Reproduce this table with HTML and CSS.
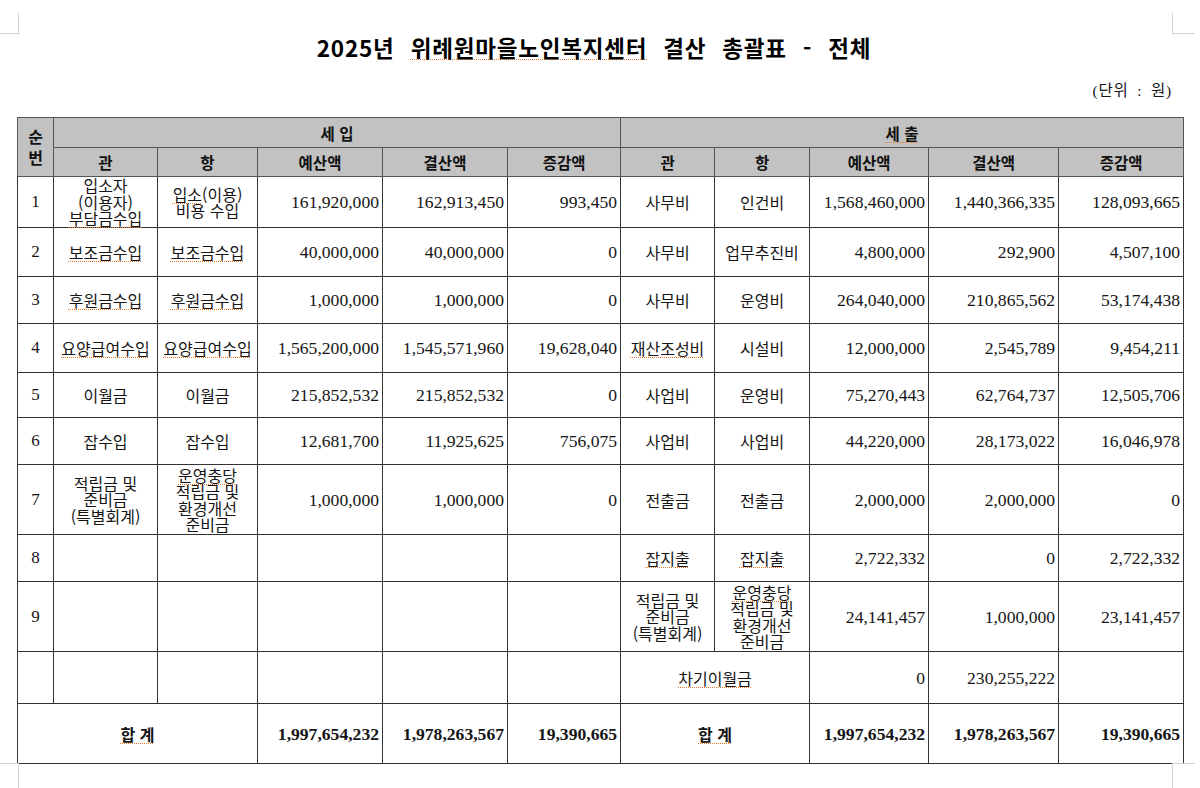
FILE: index.html
```html
<!DOCTYPE html>
<html lang="ko">
<head>
<meta charset="utf-8">
<title>2025년 위례원마을노인복지센터 결산 총괄표 - 전체</title>
<link rel="stylesheet" href="styles.css">
</head>
<body>
<div class="page">
  <div class="mark mark-tl"></div>
  <div class="mark mark-tr"></div>
  <div class="mark mark-bl"></div>
  <div class="mark mark-br"></div>

  <h1 class="title">2025년 <span class="sp">위례원마을노인복지센터</span> 결산 총괄표 - 전체</h1>
  <div class="unit">(단위 : 원)</div>

  <table class="sheet">
    <colgroup>
      <col class="c-no">
      <col class="c-gwan">
      <col class="c-hang">
      <col class="c-amt">
      <col class="c-amt">
      <col class="c-diff">
      <col class="c-gwan2">
      <col class="c-hang2">
      <col class="c-amt2">
      <col class="c-amt3">
      <col class="c-amt">
    </colgroup>
    <thead>
      <tr class="h1">
        <th rowspan="2" class="no-head">순<br>번</th>
        <th colspan="5">세 입</th>
        <th colspan="5"><span class="sp">세 출</span></th>
      </tr>
      <tr class="h2">
        <th>관</th><th>항</th><th>예산액</th><th>결산액</th><th>증감액</th>
        <th>관</th><th>항</th><th>예산액</th><th>결산액</th><th>증감액</th>
      </tr>
    </thead>
    <tbody>
      <tr class="r51">
        <td class="no">1</td>
        <td class="t ml">입소자<br>(이용자)<br><span class="sp">부담금수입</span></td>
        <td class="t ml"><span class="sp">입소</span>(이용)<br>비용 수입</td>
        <td class="n">161,920,000</td><td class="n">162,913,450</td><td class="n">993,450</td>
        <td class="t">사무비</td><td class="t">인건비</td>
        <td class="n">1,568,460,000</td><td class="n">1,440,366,335</td><td class="n">128,093,665</td>
      </tr>
      <tr class="r49">
        <td class="no">2</td>
        <td class="t"><span class="sp">보조금수입</span></td><td class="t"><span class="sp">보조금수입</span></td>
        <td class="n">40,000,000</td><td class="n">40,000,000</td><td class="n">0</td>
        <td class="t">사무비</td><td class="t">업무추진비</td>
        <td class="n">4,800,000</td><td class="n">292,900</td><td class="n">4,507,100</td>
      </tr>
      <tr class="r47">
        <td class="no">3</td>
        <td class="t"><span class="sp">후원금수입</span></td><td class="t"><span class="sp">후원금수입</span></td>
        <td class="n">1,000,000</td><td class="n">1,000,000</td><td class="n">0</td>
        <td class="t">사무비</td><td class="t">운영비</td>
        <td class="n">264,040,000</td><td class="n">210,865,562</td><td class="n">53,174,438</td>
      </tr>
      <tr class="r49">
        <td class="no">4</td>
        <td class="t"><span class="sp">요양급여수입</span></td><td class="t"><span class="sp">요양급여수입</span></td>
        <td class="n">1,565,200,000</td><td class="n">1,545,571,960</td><td class="n">19,628,040</td>
        <td class="t"><span class="sp">재산조성비</span></td><td class="t">시설비</td>
        <td class="n">12,000,000</td><td class="n">2,545,789</td><td class="n">9,454,211</td>
      </tr>
      <tr class="r45">
        <td class="no">5</td>
        <td class="t">이월금</td><td class="t">이월금</td>
        <td class="n">215,852,532</td><td class="n">215,852,532</td><td class="n">0</td>
        <td class="t">사업비</td><td class="t">운영비</td>
        <td class="n">75,270,443</td><td class="n">62,764,737</td><td class="n">12,505,706</td>
      </tr>
      <tr class="r47">
        <td class="no">6</td>
        <td class="t">잡수입</td><td class="t">잡수입</td>
        <td class="n">12,681,700</td><td class="n">11,925,625</td><td class="n">756,075</td>
        <td class="t">사업비</td><td class="t">사업비</td>
        <td class="n">44,220,000</td><td class="n">28,173,022</td><td class="n">16,046,978</td>
      </tr>
      <tr class="r70">
        <td class="no">7</td>
        <td class="t ml">적립금 및<br>준비금<br>(특별회계)</td>
        <td class="t ml"><span class="sp">운영충당</span><br>적립금 및<br>환경개선<br>준비금</td>
        <td class="n">1,000,000</td><td class="n">1,000,000</td><td class="n">0</td>
        <td class="t">전출금</td><td class="t">전출금</td>
        <td class="n">2,000,000</td><td class="n">2,000,000</td><td class="n">0</td>
      </tr>
      <tr class="r47">
        <td class="no">8</td>
        <td></td><td></td><td></td><td></td><td></td>
        <td class="t"><span class="sp">잡지출</span></td><td class="t"><span class="sp">잡지출</span></td>
        <td class="n">2,722,332</td><td class="n">0</td><td class="n">2,722,332</td>
      </tr>
      <tr class="r70">
        <td class="no">9</td>
        <td></td><td></td><td></td><td></td><td></td>
        <td class="t ml">적립금 및<br>준비금<br>(특별회계)</td>
        <td class="t ml"><span class="sp">운영충당</span><br>적립금 및<br>환경개선<br>준비금</td>
        <td class="n">24,141,457</td><td class="n">1,000,000</td><td class="n">23,141,457</td>
      </tr>
      <tr class="r52">
        <td></td><td></td><td></td><td></td><td></td><td></td>
        <td class="t" colspan="2"><span class="sp">차기이월금</span></td>
        <td class="n">0</td><td class="n">230,255,222</td><td></td>
      </tr>
      <tr class="r60 total">
        <td class="t sum" colspan="3"><span class="sp">합 계</span></td>
        <td class="n">1,997,654,232</td><td class="n">1,978,263,567</td><td class="n">19,390,665</td>
        <td class="t sum" colspan="2"><span class="sp">합 계</span></td>
        <td class="n">1,997,654,232</td><td class="n">1,978,263,567</td><td class="n">19,390,665</td>
      </tr>
    </tbody>
  </table>
</div>
</body>
</html>
```

FILE: styles.css
```css
html, body {
  margin: 0;
  padding: 0;
  background: #ffffff;
}

body {
  font-family: "Liberation Serif", "Noto Sans CJK KR", serif;
  color: #151515;
}

.page {
  position: relative;
  width: 1200px;
  height: 788px;
  overflow: hidden;
}

/* page corner guides */
.mark {
  position: absolute;
  border-color: #d4d4d4;
  border-style: solid;
  border-width: 0;
}
.mark-tl { left: 0; top: 13px; width: 18px; height: 20px; border-right-width: 1px; border-bottom-width: 1px; }
.mark-tr { left: 1172px; top: 13px; width: 22px; height: 20px; border-left-width: 1px; border-bottom-width: 1px; }
.mark-bl { left: 0; top: 763px; width: 18px; height: 25px; border-right-width: 1px; border-top-width: 1px; }
.mark-br { left: 1172px; top: 763px; width: 22px; height: 25px; border-left-width: 1px; border-top-width: 1px; }

.title {
  margin: 32px 0 0;
  padding-right: 12px;
  height: 30px;
  line-height: 30px;
  text-align: center;
  font-family: "Noto Sans CJK KR", sans-serif;
  font-weight: bold;
  font-size: 22.5px;
  letter-spacing: 0.8px;
  word-spacing: 9px;
  color: #000;
}

.sp {
  text-decoration: underline dotted #ee7a2c;
  text-decoration-thickness: 1px;
  text-underline-offset: 2px;
}

.unit {
  margin-top: 18px;
  height: 22px;
  line-height: 22px;
  padding-right: 28px;
  text-align: right;
  font-size: 15.5px;
  letter-spacing: 0.8px;
  word-spacing: 4px;
}

.sheet {
  margin: 15px 0 0 17px;
  width: 1166px;
  border-collapse: collapse;
  table-layout: fixed;
  border: 1px solid #444;
}

.c-no { width: 36px; }
.c-gwan { width: 104px; }
.c-hang { width: 100px; }
.c-amt { width: 125px; }
.c-diff { width: 113px; }
.c-gwan2 { width: 94px; }
.c-hang2 { width: 95px; }
.c-amt2 { width: 119px; }
.c-amt3 { width: 130px; }

.sheet th,
.sheet td {
  border: 1px solid #333;
  padding: 0 3px;
  white-space: nowrap;
  vertical-align: middle;
}

.sheet th {
  background: #c2c2c2;
  font-family: "Noto Sans CJK KR", sans-serif;
  font-weight: bold;
  font-size: 15.5px;
  line-height: 20px;
  text-align: center;
  color: #111;
  border-color: #555;
}

.sheet th.no-head {
  font-size: 16px;
  line-height: 21px;
  padding: 0;
}

.h1 { height: 30px; }
.h2 { height: 29px; }
.r45 { height: 45px; }
.r47 { height: 47px; }
.r49 { height: 49px; }
.r51 { height: 51px; }
.r52 { height: 52px; }
.r60 { height: 60px; }
.r70 { height: 70px; }

.sheet td {
  font-size: 16px;
  line-height: 20px;
}

.sheet td.no {
  text-align: center;
  font-size: 17px;
  padding: 0;
}

.sheet td.t {
  text-align: center;
  font-family: "Noto Sans CJK KR", sans-serif;
  padding: 0 1px;
}

.sheet td.ml {
  line-height: 16.5px;
}

.sheet td.n {
  text-align: right;
  font-size: 17.6px;
  padding: 0 3px 0 2px;
}

.total td.n {
  font-weight: bold;
}

.sheet td.sum {
  font-weight: bold;
  font-size: 16px;
}
```
